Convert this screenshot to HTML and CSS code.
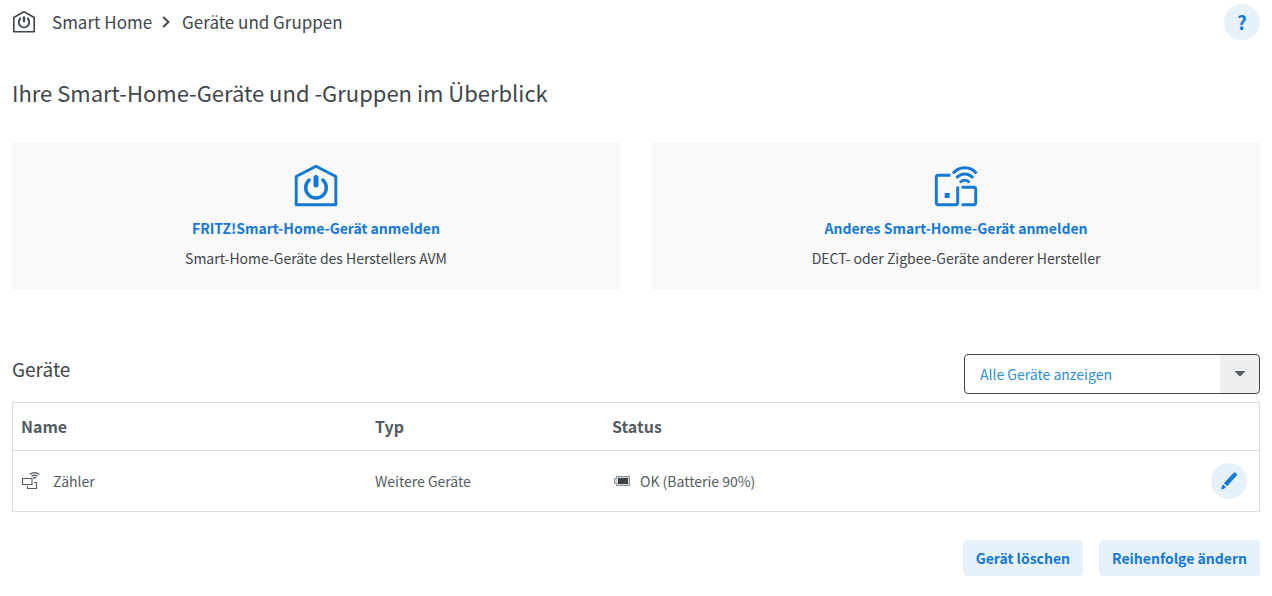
FILE: index.html
```
<!DOCTYPE html>
<html lang="de">
<head>
<meta charset="utf-8">
<meta name="viewport" content="width=device-width, initial-scale=1">
<title>Geräte und Gruppen</title>
<link rel="stylesheet" href="styles.css">
</head>
<body>
<header class="topbar">
  <nav class="breadcrumb" aria-label="Navigationspfad">
    <svg class="breadcrumb-icon" viewBox="0 0 24 24" fill="none" stroke="currentColor" stroke-linecap="round" stroke-linejoin="round" aria-hidden="true">
      <path d="M1.800 7.500L12 1.700L22.200 7.500V21.800H1.800Z" stroke-width="1.600"/>
      <path d="M8.300 8.500a5.200 5.200 0 1 0 7.400 0" stroke-width="1.900"/>
      <path d="M12 7.300v4" stroke-width="2.300"/>
    </svg>
    <span>Smart Home</span>
    <svg class="chevron" viewBox="0 0 8 12" fill="none" stroke="currentColor" stroke-width="1.900" aria-hidden="true"><path d="M1.200 1L6.500 6L1.200 11"/></svg>
    <span>Geräte und Gruppen</span>
  </nav>
  <button class="round-button help" type="button" aria-label="Hilfe">?</button>
</header>
<main>
  <h1 class="page-title">Ihre Smart-Home-Geräte und -Gruppen im Überblick</h1>
  <section class="cards">
    <div class="card">
      <svg class="card-icon" viewBox="0 0 48 48" fill="none" stroke="currentColor" stroke-linecap="round" stroke-linejoin="round" aria-hidden="true">
        <path d="M4.200 14.500L24 4.200L43.800 14.500V42.800H4.200Z" stroke-width="2.900"/>
        <path d="M17.200 18a10.300 10.300 0 1 0 13.600 0" stroke-width="3.500"/>
        <path d="M24 15.500v7.500" stroke-width="5"/>
      </svg>
      <a class="card-link" href="#">FRITZ!Smart-Home-Gerät anmelden</a>
      <p class="card-text">Smart-Home-Geräte des Herstellers AVM</p>
    </div>
    <div class="card">
      <svg class="card-icon" viewBox="0 0 48 48" fill="none" stroke="currentColor" stroke-width="2.900" stroke-linejoin="round" aria-hidden="true">
        <path d="M18.500 13.300H6.300Q4.300 13.300 4.300 15.300V40.700Q4.300 42.700 6.300 42.700H23.700Q25.700 42.700 25.700 40.700V24.500"/>
        <path d="M29.500 25.300H41.700Q43.700 25.300 43.700 27.300V40.700Q43.700 42.700 41.700 42.700H29.500"/>
        <path d="M21 11.500A15 15 0 0 1 44.500 11.500M24.500 16A10.400 10.400 0 0 1 41 16M28 20.500A6 6 0 0 1 37.500 20.500"/>
        <path d="M12.700 31h5v5h-5z" fill="currentColor" stroke="none"/>
      </svg>
      <a class="card-link" href="#">Anderes Smart-Home-Gerät anmelden</a>
      <p class="card-text">DECT- oder Zigbee-Geräte anderer Hersteller</p>
    </div>
  </section>
  <section>
    <div class="list-head">
      <h2 class="list-title">Geräte</h2>
      <div class="filter">
        <select class="filter-select" aria-label="Gerätefilter"><option>Alle Geräte anzeigen</option></select>
        <svg class="filter-arrow" viewBox="0 0 12 6" aria-hidden="true"><path d="M0.500 0H11.500L6.500 5.300H5.500Z" fill="currentColor"/></svg>
      </div>
    </div>
    <table class="devices">
      <thead>
        <tr><th class="col-name">Name</th><th class="col-type">Typ</th><th class="col-status">Status</th><th class="col-action"></th></tr>
      </thead>
      <tbody>
        <tr>
          <td><div class="cell">
            <svg class="device-icon" viewBox="0 0 20 20" fill="none" stroke="currentColor" aria-hidden="true">
              <path d="M1.500 7.500h9.500v6H1.500zM13 11.500h2.500v6h-9v-2.500" stroke-width="1.100"/>
              <path d="M8.700 3.300Q13.600 0 18.500 3.300M10.500 5.200Q13.600 3 16.700 5.200M12 7.200Q13.600 5.800 15.200 7.200" stroke-width="1.300"/>
            </svg>
            <span>Zähler</span>
          </div></td>
          <td>Weitere Geräte</td>
          <td><div class="cell">
            <svg class="battery" viewBox="0 0 16 10" aria-hidden="true">
              <path d="M2.500 0.500h13v9h-13v-2h-2v-5h2z" fill="#d5d7d9" stroke="#8b9094"/>
              <path d="M4 2h10v6H4z" fill="#3c4348"/>
            </svg>
            <span>OK (Batterie 90%)</span>
          </div></td>
          <td class="action-cell"><button class="round-button" type="button" aria-label="Zähler bearbeiten">
            <svg class="pencil" viewBox="0 0 20 20" fill="currentColor" aria-hidden="true">
              <path d="M14.600 1.900Q15.700 0.800 16.800 1.900L17.500 2.600Q18.500 3.600 17.500 4.700L8.100 15.200L4.900 12.300Z"/>
              <path d="M4.200 13.400L6.900 15.900L5.400 17.500L2.200 18.800L3 14.900Z"/>
            </svg>
          </button></td>
        </tr>
      </tbody>
    </table>
    <div class="actions">
      <button class="button" type="button">Gerät löschen</button>
      <button class="button" type="button">Reihenfolge ändern</button>
    </div>
  </section>
</main>
</body>
</html>
```
FILE: styles.css
```
* { box-sizing: border-box; }

body {
  margin: 0;
  padding: 4px 12px 20px;
  background: #fff;
  color: #3f464c;
  font-family: "Noto Sans CJK SC", "Noto Sans", sans-serif;
  font-size: 14px;
  line-height: 24px;
}

button, select { font: inherit; }
h1, h2, p { margin: 0; font-weight: 400; }

.topbar { display: flex; align-items: center; justify-content: space-between; }
.breadcrumb { display: flex; align-items: center; font-size: 17px; }
.breadcrumb-icon { width: 24px; height: 24px; margin-right: 16px; }
.chevron { width: 8px; height: 12px; margin: 0 12px 0 10px; }

.round-button {
  display: inline-flex;
  align-items: center;
  justify-content: center;
  width: 36px;
  height: 36px;
  padding: 0;
  border: 0;
  border-radius: 50%;
  background: #e6f1fa;
  color: #1478d7;
}
.help { font-size: 19px; font-weight: 700; }
.pencil { width: 20px; height: 20px; }

.page-title { margin-top: 36px; font-size: 22px; line-height: 32px; }

.cards { display: grid; grid-template-columns: 1fr 1fr; gap: 32px; margin-top: 34px; }
.card {
  display: flex;
  flex-direction: column;
  align-items: center;
  padding: 20px 16px;
  background: #f9f9f9;
}
.card-icon { width: 48px; height: 48px; color: #1478d7; }
.card-link { margin-top: 6px; color: #1478d7; font-weight: 700; text-decoration: none; }
.card-text { margin-top: 6px; }

.list-head { display: flex; justify-content: space-between; margin-top: 64px; }
.list-title { padding-top: 3px; font-size: 19px; }
.filter { position: relative; width: 296px; }
.filter-select {
  display: block;
  width: 100%;
  height: 40px;
  padding: 0 48px 0 15px;
  border: 1px solid #3f464c;
  border-radius: 4px;
  appearance: none;
  background: linear-gradient(#efefef, #efefef) right / 39px 100% no-repeat #fff;
  color: #2b8fe0;
}
.filter-arrow {
  position: absolute;
  top: 17px;
  right: 14px;
  width: 12px;
  height: 6px;
  color: #555e65;
  pointer-events: none;
}

.devices {
  width: 100%;
  margin-top: 8px;
  border: 1px solid #dcdcdc;
  border-spacing: 0;
  table-layout: fixed;
  color: #535c63;
}
.devices th { height: 48px; padding: 0 8px 2px; border-bottom: 1px solid #dcdcdc; font-size: 16px; text-align: left; }
.devices td { height: 60px; padding: 0 8px; }
.col-name { width: 354px; }
.col-type { width: 237px; }
.devices .action-cell { padding-right: 12px; text-align: right; }
.col-action { width: 64px; }
.action-cell .round-button { vertical-align: middle; }
.cell { display: flex; align-items: center; }
.device-icon { width: 20px; height: 20px; margin-right: 12px; }
.battery { width: 16px; height: 10px; margin: 0 10px 0 2px; }

.actions { display: flex; justify-content: flex-end; gap: 16px; margin-top: 28px; }
.button {
  height: 36px;
  padding: 0 13px;
  border: 0;
  border-radius: 4px;
  background: #e6f1fa;
  color: #1478d7;
  font-weight: 700;
}
```
